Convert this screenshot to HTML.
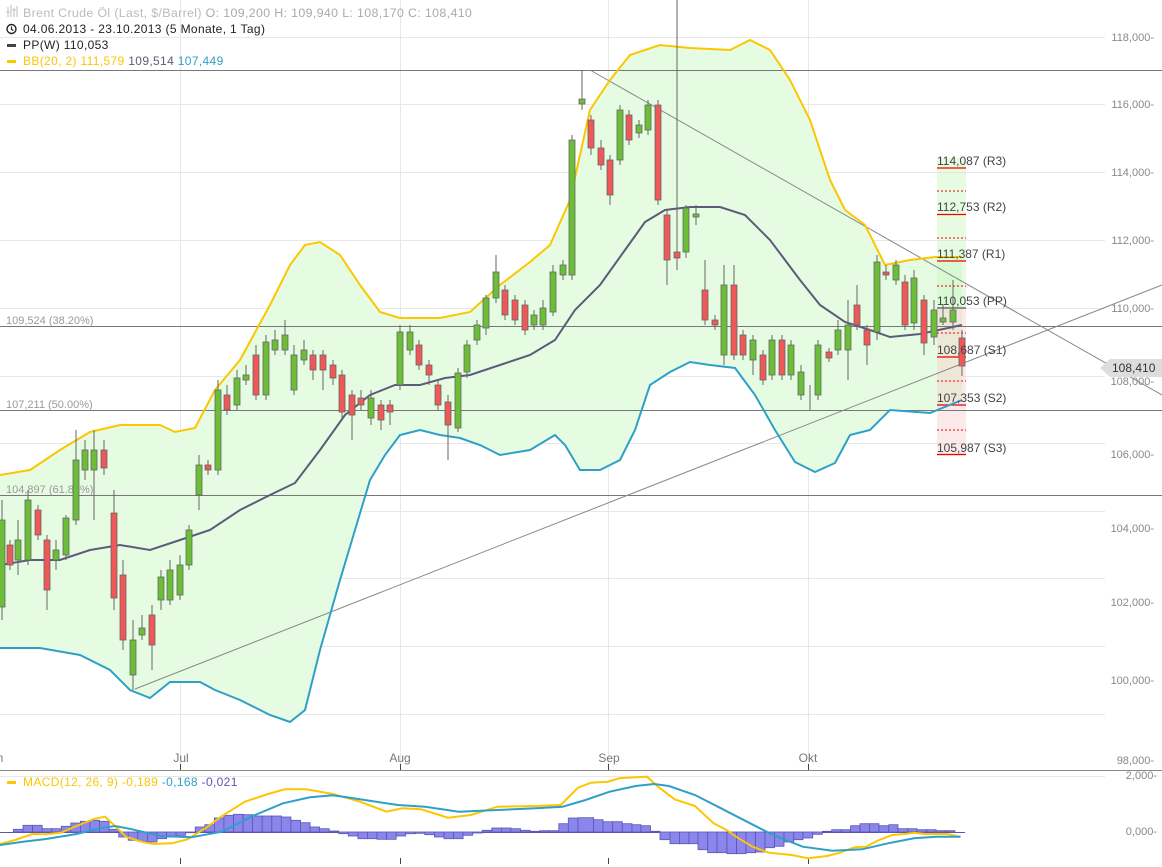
<!DOCTYPE html>
<html><head><meta charset="utf-8"><style>
html,body{margin:0;padding:0;background:#fff;width:1162px;height:867px;overflow:hidden}
svg{display:block;font-family:"Liberation Sans",sans-serif}
.lg{letter-spacing:0.35px}
</style></head><body>
<svg width="1162" height="867" viewBox="0 0 1162 867" xmlns="http://www.w3.org/2000/svg">
<g stroke="#e8e8e8" stroke-width="1">
<line x1="0" y1="37.5" x2="1105" y2="37.5"/><line x1="0" y1="104.5" x2="1105" y2="104.5"/><line x1="0" y1="172.5" x2="1105" y2="172.5"/><line x1="0" y1="240.5" x2="1105" y2="240.5"/><line x1="0" y1="308.5" x2="1105" y2="308.5"/><line x1="0" y1="376.5" x2="1105" y2="376.5"/><line x1="0" y1="443.5" x2="1105" y2="443.5"/><line x1="0" y1="511.5" x2="1105" y2="511.5"/><line x1="0" y1="578.5" x2="1105" y2="578.5"/><line x1="0" y1="646.5" x2="1105" y2="646.5"/><line x1="0" y1="714.5" x2="1105" y2="714.5"/>
<line x1="180.5" y1="0" x2="180.5" y2="770"/><line x1="400.5" y1="0" x2="400.5" y2="770"/><line x1="608.5" y1="0" x2="608.5" y2="770"/><line x1="808.5" y1="0" x2="808.5" y2="770"/>
<line x1="0" y1="776.5" x2="1105" y2="776.5"/>
</g>
<polygon fill="#e6fce2" points="0,475 30,470 60,450 90,432 120,425 160,425 175,432 195,428 215,390 240,360 270,305 290,265 305,245 320,242 340,255 360,285 380,312 400,318 440,318 470,312 500,285 530,262 550,245 570,200 590,110 610,80 630,55 660,45 690,48 730,50 750,40 770,50 790,80 810,120 830,180 845,210 865,225 885,265 910,260 935,257 962,257 962,400 930,413 890,410 870,430 850,435 835,463 815,472 795,462 775,430 755,395 735,368 710,365 690,362 670,372 650,385 635,430 620,460 600,470 580,470 565,445 555,435 530,450 500,455 480,445 460,438 440,435 420,430 400,435 385,455 370,480 355,530 340,580 320,650 305,710 290,722 270,715 240,700 215,690 200,682 170,682 150,698 130,690 110,670 80,655 40,648 0,648"/>
<rect x="937" y="158" width="29" height="150" fill="#c9f7c1" opacity="0.45"/>
<rect x="937" y="308" width="29" height="148" fill="#f7c9c9" opacity="0.4"/>
<g stroke="#777" stroke-width="1">
<line x1="0" y1="70.5" x2="1162" y2="70.5"/><line x1="0" y1="326.5" x2="1162" y2="326.5"/><line x1="0" y1="410.5" x2="1162" y2="410.5"/><line x1="0" y1="495.5" x2="1162" y2="495.5"/>
</g>
<g fill="#999" font-size="11">
<text x="6" y="324">109,524 (38.20%)</text><text x="6" y="408">107,211 (50.00%)</text><text x="6" y="493">104,897 (61.80%)</text>
</g>
<g stroke="#888" stroke-width="1">
<line x1="135" y1="689" x2="1162" y2="285"/><line x1="590" y1="70" x2="1162" y2="395"/>
</g>
<g stroke="#e00" stroke-width="1.2">
<line x1="937" y1="168" x2="966" y2="168"/><line x1="937" y1="214.5" x2="966" y2="214.5"/><line x1="937" y1="261" x2="966" y2="261"/><line x1="937" y1="357" x2="966" y2="357"/><line x1="937" y1="405" x2="966" y2="405"/><line x1="937" y1="454.5" x2="966" y2="454.5"/>
</g>
<line x1="937" y1="308" x2="966" y2="308" stroke="#555" stroke-width="1.2"/>
<g stroke="#e00" stroke-width="1" stroke-dasharray="2,2">
<line x1="937" y1="191" x2="966" y2="191"/><line x1="937" y1="238" x2="966" y2="238"/><line x1="937" y1="286" x2="966" y2="286"/><line x1="937" y1="333" x2="966" y2="333"/><line x1="937" y1="381" x2="966" y2="381"/><line x1="937" y1="430" x2="966" y2="430"/>
</g>
<polyline fill="none" stroke="#fcc600" stroke-width="2" points="0,475 30,470 60,450 90,432 120,425 160,425 175,432 195,428 215,390 240,360 270,305 290,265 305,245 320,242 340,255 360,285 380,312 400,318 440,318 470,312 500,285 530,262 550,245 570,200 590,110 610,80 630,55 660,45 690,48 730,50 750,40 770,50 790,80 810,120 830,180 845,210 865,225 885,265 910,260 935,257 962,257"/>
<polyline fill="none" stroke="#2ea0c8" stroke-width="2" points="0,648 40,648 80,655 110,670 130,690 150,698 170,682 200,682 215,690 240,700 270,715 290,722 305,710 320,650 340,580 355,530 370,480 385,455 400,435 420,430 440,435 460,438 480,445 500,455 530,450 555,435 565,445 580,470 600,470 620,460 635,430 650,385 670,372 690,362 710,365 735,368 755,395 775,430 795,462 815,472 835,463 850,435 870,430 890,410 930,413 962,400"/>
<polyline fill="none" stroke="#5e5a7a" stroke-width="2" points="0,565 30,560 60,560 90,550 120,545 150,550 180,540 210,530 240,510 270,495 295,483 320,450 345,415 370,395 395,385 420,385 445,378 470,375 500,365 530,355 555,340 575,310 600,285 625,250 645,222 665,210 690,207 720,207 745,215 770,240 800,280 820,305 845,322 870,330 890,337 920,334 962,325"/>
<g stroke="#666" stroke-width="1">
<path d="M2 500V620M10 540V570M18 520V575M28 490V565M38 505V540M47 535V610M56 540V570M66 515V560M76 430V525M85 440V480M94 430V520M104 440V475M114 490V610M123 560V650M133 620V690M142 615V640M152 605V670M161 570V610M170 560V605M180 555V600M189 525V570M199 455V510M208 460V475M218 380V475M227 385V415M237 370V410M246 365V385M256 345V400M266 335V400M275 330V355M285 320V355M294 345V395M304 340V365M313 350V380M323 350V390M333 360V385M342 370V420M352 390V440M361 390V410M371 390V425M381 400V430M390 400V425M400 325V390M410 325V355M419 340V370M429 360V385M438 380V410M448 395V460M458 368V432M467 340V378M477 320V345M486 295V335M496 255V303M505 285V320M515 295V325M525 300V335M534 310V330M543 300V330M553 265V316M563 260V280M572 135V280M582 70V110M591 115V155M601 140V170M610 155V205M620 105V165M629 110V145M639 120V138M648 100V135M658 100V205M667 210V285M677 0V270M686 205V258M696 205V225M705 260V325M715 315V330M724 265V365M734 265V360M743 330V360M753 335V375M763 350V385M772 335V380M782 335V380M791 340V380M801 365V400M810 385V410M818 340V400M829 348V362M838 320V355M848 300V380M857 285V330M867 325V365M877 255V340M886 265V280M896 260V285M905 275V330M914 270V330M924 295V355M934 300V345M943 305V325M953 280V330M962 330V376"/>
</g>
<g stroke="#666" stroke-width="0.8" fill="#6cbd38">
<rect x="-1" y="520" width="6" height="87"/><rect x="15" y="540" width="6" height="20"/><rect x="25" y="500" width="6" height="60"/><rect x="53" y="550" width="6" height="10"/><rect x="63" y="518" width="6" height="37"/><rect x="73" y="460" width="6" height="60"/><rect x="82" y="450" width="6" height="20"/><rect x="91" y="450" width="6" height="20"/><rect x="130" y="640" width="6" height="35"/><rect x="139" y="628" width="6" height="7"/><rect x="158" y="577" width="6" height="23"/><rect x="167" y="570" width="6" height="30"/><rect x="177" y="565" width="6" height="30"/><rect x="186" y="530" width="6" height="35"/><rect x="196" y="465" width="6" height="30"/><rect x="215" y="390" width="6" height="80"/><rect x="234" y="378" width="6" height="27"/><rect x="243" y="375" width="6" height="5"/><rect x="263" y="342" width="6" height="53"/><rect x="272" y="340" width="6" height="10"/><rect x="282" y="335" width="6" height="15"/><rect x="291" y="355" width="6" height="35"/><rect x="301" y="350" width="6" height="10"/><rect x="368" y="398" width="6" height="20"/><rect x="397" y="332" width="6" height="53"/><rect x="407" y="332" width="6" height="18"/><rect x="455" y="373" width="6" height="55"/><rect x="464" y="345" width="6" height="27"/><rect x="474" y="325" width="6" height="15"/><rect x="483" y="298" width="6" height="30"/><rect x="493" y="272" width="6" height="26"/><rect x="531" y="315" width="6" height="10"/><rect x="540" y="308" width="6" height="17"/><rect x="550" y="272" width="6" height="40"/><rect x="560" y="265" width="6" height="10"/><rect x="569" y="140" width="6" height="135"/><rect x="579" y="99" width="6" height="5"/><rect x="617" y="110" width="6" height="50"/><rect x="636" y="125" width="6" height="8"/><rect x="645" y="105" width="6" height="25"/><rect x="683" y="208" width="6" height="44"/><rect x="693" y="214" width="6" height="3"/><rect x="721" y="285" width="6" height="70"/><rect x="750" y="340" width="6" height="20"/><rect x="769" y="340" width="6" height="35"/><rect x="788" y="345" width="6" height="30"/><rect x="798" y="372" width="6" height="23"/><rect x="815" y="345" width="6" height="50"/><rect x="835" y="330" width="6" height="20"/><rect x="845" y="325" width="6" height="25"/><rect x="874" y="262" width="6" height="70"/><rect x="893" y="265" width="6" height="15"/><rect x="911" y="278" width="6" height="45"/><rect x="931" y="310" width="6" height="27"/><rect x="940" y="318" width="6" height="4"/><rect x="950" y="310" width="6" height="12"/>
</g>
<g stroke="#666" stroke-width="0.8" fill="#f05858">
<rect x="7" y="545" width="6" height="20"/><rect x="35" y="510" width="6" height="25"/><rect x="44" y="540" width="6" height="50"/><rect x="101" y="450" width="6" height="18"/><rect x="111" y="513" width="6" height="85"/><rect x="120" y="575" width="6" height="65"/><rect x="149" y="615" width="6" height="30"/><rect x="205" y="465" width="6" height="5"/><rect x="224" y="395" width="6" height="15"/><rect x="253" y="355" width="6" height="40"/><rect x="310" y="355" width="6" height="15"/><rect x="320" y="355" width="6" height="15"/><rect x="330" y="365" width="6" height="13"/><rect x="339" y="375" width="6" height="37"/><rect x="349" y="395" width="6" height="20"/><rect x="358" y="398" width="6" height="7"/><rect x="378" y="405" width="6" height="15"/><rect x="387" y="405" width="6" height="7"/><rect x="416" y="345" width="6" height="20"/><rect x="426" y="365" width="6" height="10"/><rect x="435" y="385" width="6" height="20"/><rect x="445" y="402" width="6" height="23"/><rect x="502" y="290" width="6" height="25"/><rect x="512" y="300" width="6" height="20"/><rect x="522" y="305" width="6" height="25"/><rect x="588" y="120" width="6" height="28"/><rect x="598" y="148" width="6" height="17"/><rect x="607" y="160" width="6" height="35"/><rect x="626" y="115" width="6" height="25"/><rect x="655" y="105" width="6" height="95"/><rect x="664" y="215" width="6" height="45"/><rect x="674" y="252" width="6" height="6"/><rect x="702" y="290" width="6" height="30"/><rect x="712" y="320" width="6" height="5"/><rect x="731" y="285" width="6" height="70"/><rect x="740" y="335" width="6" height="20"/><rect x="760" y="355" width="6" height="25"/><rect x="779" y="340" width="6" height="35"/><rect x="826" y="352" width="6" height="6"/><rect x="854" y="305" width="6" height="20"/><rect x="864" y="330" width="6" height="15"/><rect x="883" y="272" width="6" height="3"/><rect x="902" y="282" width="6" height="43"/><rect x="921" y="300" width="6" height="43"/><rect x="959" y="338" width="6" height="28"/>
</g>
<g fill="#444" font-size="12">
<text x="937" y="165">114,087 (R3)</text><text x="937" y="211">112,753 (R2)</text><text x="937" y="258">111,387 (R1)</text><text x="937" y="305">110,053 (PP)</text><text x="937" y="354">108,687 (S1)</text><text x="937" y="402">107,353 (S2)</text><text x="937" y="452">105,987 (S3)</text>
</g>
<g fill="#888" font-size="11" text-anchor="end">
<text x="1154" y="41">118,000-</text><text x="1154" y="108">116,000-</text><text x="1154" y="176">114,000-</text><text x="1154" y="244">112,000-</text><text x="1154" y="312">110,000-</text><text x="1154" y="385">108,000-</text><text x="1154" y="458">106,000-</text><text x="1154" y="532">104,000-</text><text x="1154" y="606">102,000-</text><text x="1154" y="684">100,000-</text><text x="1154" y="764">98,000-</text>
<text x="1157" y="779">2,000-</text><text x="1157" y="835">0,000-</text>
</g>
<polygon points="1100,368 1110,359 1162,359 1162,377 1110,377" fill="#ddd"/>
<text x="1112" y="372" fill="#333" font-size="12">108,410</text>
<line x1="0" y1="770.5" x2="1162" y2="770.5" stroke="#888"/>
<g stroke="#444"><path d="M180.5 764V770M400.5 764V770M608.5 764V770M808.5 764V770M180.5 858V864M400.5 858V864M608.5 858V864M808.5 858V864"/></g>
<g fill="#777" font-size="12" text-anchor="middle">
<text x="0" y="762">n</text><text x="181" y="762">Jul</text><text x="400" y="762">Aug</text><text x="609" y="762">Sep</text><text x="808" y="762">Okt</text>
</g>
<line x1="0" y1="832.5" x2="965" y2="832.5" stroke="#5b55b5" stroke-width="1"/>
<g fill="#8a86ec" stroke="#5b55b5" stroke-width="0.8">
<rect x="13.4" y="829.3" width="9.6" height="2.7"/><rect x="23" y="825.3" width="9.6" height="6.7"/><rect x="32.6" y="825.3" width="9.6" height="6.7"/><rect x="42.1" y="828.7" width="9.6" height="3.3"/><rect x="51.7" y="828.7" width="9.6" height="3.3"/><rect x="61.3" y="826.3" width="9.6" height="5.7"/><rect x="70.8" y="823" width="9.6" height="9"/><rect x="80.4" y="821.3" width="9.6" height="10.7"/><rect x="90" y="820.3" width="9.6" height="11.7"/><rect x="99.5" y="821.3" width="9.6" height="10.7"/><rect x="109.1" y="829.3" width="9.6" height="2.7"/>
<rect x="118.7" y="832" width="9.6" height="5"/><rect x="128.2" y="832" width="9.6" height="8.3"/><rect x="137.8" y="832" width="9.6" height="9.3"/><rect x="147.4" y="832" width="9.6" height="10"/><rect x="157" y="832" width="9.6" height="6.7"/><rect x="166.5" y="832" width="9.6" height="5"/><rect x="176.1" y="832" width="9.6" height="3.3"/><rect x="185.7" y="832" width="9.6" height="0.7"/>
<rect x="195.2" y="827" width="9.6" height="5"/><rect x="204.8" y="824.7" width="9.6" height="7.3"/><rect x="214.4" y="818" width="9.6" height="14"/><rect x="223.9" y="815.3" width="9.6" height="16.7"/><rect x="233.5" y="814.3" width="9.6" height="17.7"/><rect x="243.1" y="814.7" width="9.6" height="17.3"/><rect x="252.6" y="816" width="9.6" height="16"/><rect x="262.2" y="816" width="9.6" height="16"/><rect x="271.8" y="816" width="9.6" height="16"/><rect x="281.3" y="817" width="9.6" height="15"/><rect x="290.9" y="820.3" width="9.6" height="11.7"/><rect x="300.5" y="822.7" width="9.6" height="9.3"/><rect x="310" y="827" width="9.6" height="5"/><rect x="319.6" y="828.7" width="9.6" height="3.3"/><rect x="329.2" y="831" width="9.6" height="1"/>
<rect x="338.7" y="832" width="9.6" height="1.7"/><rect x="348.3" y="832" width="9.6" height="4"/><rect x="357.9" y="832" width="9.6" height="6.7"/><rect x="367.4" y="832" width="9.6" height="6.7"/><rect x="377" y="832" width="9.6" height="7.3"/><rect x="386.6" y="832" width="9.6" height="7.3"/><rect x="396.1" y="832" width="9.6" height="4"/><rect x="405.7" y="832" width="9.6" height="1.7"/><rect x="415.3" y="832" width="9.6" height="1.3"/><rect x="424.8" y="832" width="9.6" height="2.7"/><rect x="434.4" y="832" width="9.6" height="5"/><rect x="444" y="832" width="9.6" height="6.7"/><rect x="453.5" y="832" width="9.6" height="6.7"/><rect x="463.1" y="832" width="9.6" height="3.3"/><rect x="472.7" y="832" width="9.6" height="1"/>
<rect x="482.2" y="830.3" width="9.6" height="1.7"/><rect x="491.8" y="828" width="9.6" height="4"/><rect x="501.4" y="828" width="9.6" height="4"/><rect x="510.9" y="828.7" width="9.6" height="3.3"/><rect x="520.5" y="830.3" width="9.6" height="1.7"/><rect x="530.1" y="831.3" width="9.6" height="0.7"/><rect x="539.6" y="830.7" width="9.6" height="1.3"/><rect x="549.2" y="830.7" width="9.6" height="1.3"/><rect x="558.8" y="823.7" width="9.6" height="8.3"/><rect x="568.3" y="818" width="9.6" height="14"/>
<rect x="578" y="817.7" width="15.7" height="14.3"/><rect x="593.7" y="819.7" width="9.3" height="12.3"/><rect x="603" y="821.7" width="9.7" height="10.3"/><rect x="612.7" y="821.7" width="9.6" height="10.3"/><rect x="622.3" y="823.7" width="9.7" height="8.3"/><rect x="632" y="824.7" width="9" height="7.3"/><rect x="641" y="825.7" width="9.5" height="6.3"/><rect x="650.5" y="831.3" width="9.5" height="0.7"/>
<rect x="660" y="832" width="10" height="7.7"/><rect x="670" y="832" width="9.5" height="11.7"/><rect x="679.5" y="832" width="9.5" height="11.7"/><rect x="689" y="832" width="9" height="11.7"/><rect x="698" y="832" width="9.7" height="17.7"/><rect x="707.7" y="832" width="9.3" height="20.7"/><rect x="717" y="832" width="10" height="20.7"/><rect x="727" y="832" width="9.6" height="21.7"/><rect x="736.6" y="832" width="9.4" height="21.7"/><rect x="746" y="832" width="9.6" height="20.7"/><rect x="755.6" y="832" width="9.4" height="20"/><rect x="765" y="832" width="9.5" height="15.7"/><rect x="774.5" y="832" width="9.5" height="14.3"/><rect x="784" y="832" width="9.8" height="10"/><rect x="793.8" y="832" width="9.2" height="7.7"/><rect x="803" y="832" width="9.7" height="6"/><rect x="812.7" y="832" width="9.7" height="2.3"/>
<rect x="822.4" y="831.3" width="9.3" height="0.7"/><rect x="831.7" y="829.7" width="9.3" height="2.3"/><rect x="841" y="829.7" width="9.6" height="2.3"/><rect x="850.6" y="825.7" width="9.4" height="6.3"/><rect x="860" y="823.7" width="9.5" height="8.3"/><rect x="869.5" y="823.7" width="9.5" height="8.3"/><rect x="879" y="825.7" width="9.8" height="6.3"/><rect x="888.8" y="824.7" width="9.2" height="7.3"/><rect x="898" y="828.7" width="9.8" height="3.3"/><rect x="907.8" y="828.7" width="9.2" height="3.3"/><rect x="917" y="829.7" width="9.7" height="2.3"/><rect x="926.7" y="829.7" width="9.3" height="2.3"/><rect x="936" y="830.7" width="9.6" height="1.3"/><rect x="945.6" y="830.7" width="9.4" height="1.3"/>
</g>
<polyline fill="none" stroke="#fcc600" stroke-width="2" points="0,844 15,840 32.5,834 46,834.3 61,832.7 76.5,826 94,819 105,816.7 115,826 126,836.7 141.6,841.7 153,844 172,843.3 187.5,839.3 206.7,827.3 222,816 245,801.7 268,794 285,789.3 306,789.3 333,794 360,801.7 386.5,811.7 402,808.3 421,809.3 448,817.7 471,815 497.5,806.7 536,806 560.7,805 578,787.7 591,782.7 608,781.7 619,778.3 635.7,777.3 647,776.7 658,786.7 674.7,799.3 695,806 713.6,823.3 726.6,830 736,836.7 752.6,846.7 769,852.7 791.6,855 808.3,858.3 827,856 840,852.7 854.7,847.3 866,846.7 877,841 892,835 905,834 914,832.7 925,834 947.5,834 960.5,836.7"/>
<polyline fill="none" stroke="#2ea0c8" stroke-width="2" points="0,845 23,841.7 46,839 76.5,834 99.5,828.3 115,826 132,829.3 160.7,836 191,837.3 222,831.7 252.6,816 283,803.3 310,797.3 333,795.3 360,799.3 398,805 425,806.7 459,811.7 497.5,810 536,808.3 562.6,806.7 585.5,800 609.7,791.7 635.7,786 654,784 669,786 695,795 721,808.3 747,821.7 773,835 802.7,846.7 832.4,850.7 862,849.3 888,843.3 914,838.3 936.3,836.7 960.5,836.7"/>
<g font-size="12" class="lg">
<text x="23" y="17" fill="#bbb" font-size="12.4">Brent Crude Öl (Last, $/Barrel)  <tspan fill="#aaa">O: 109,200  H: 109,940  L: 108,170  C: 108,410</tspan></text>
<g stroke="#ccc" stroke-width="1.3"><path d="M8 7V17M11 5V17M14 8V17M17 6V17M6 12H10M12 10H16"/></g>
<circle cx="11.5" cy="29" r="4.5" fill="none" stroke="#222" stroke-width="1.4"/><path d="M11.5 26.5V29.3L13.3 30.5" stroke="#222" stroke-width="1.2" fill="none"/>
<text x="23" y="33" fill="#222">04.06.2013 - 23.10.2013 (5 Monate, 1 Tag)</text>
<rect x="7" y="44" width="9" height="3" fill="#444"/><text x="23" y="49" fill="#222">PP(W)  110,053</text>
<rect x="7" y="60" width="9" height="3" fill="#fcc600"/><text x="23" y="65" fill="#fcc600">BB(20, 2)  111,579  <tspan fill="#5e5a7a">109,514</tspan>  <tspan fill="#2ea0c8">107,449</tspan></text>
<rect x="7" y="781" width="9" height="3" fill="#fcc600"/><text x="23" y="786" fill="#fcc600">MACD(12, 26, 9)  -0,189  <tspan fill="#2ea0c8">-0,168</tspan>  <tspan fill="#5b55b5">-0,021</tspan></text>
</g>
</svg>
</body></html>
